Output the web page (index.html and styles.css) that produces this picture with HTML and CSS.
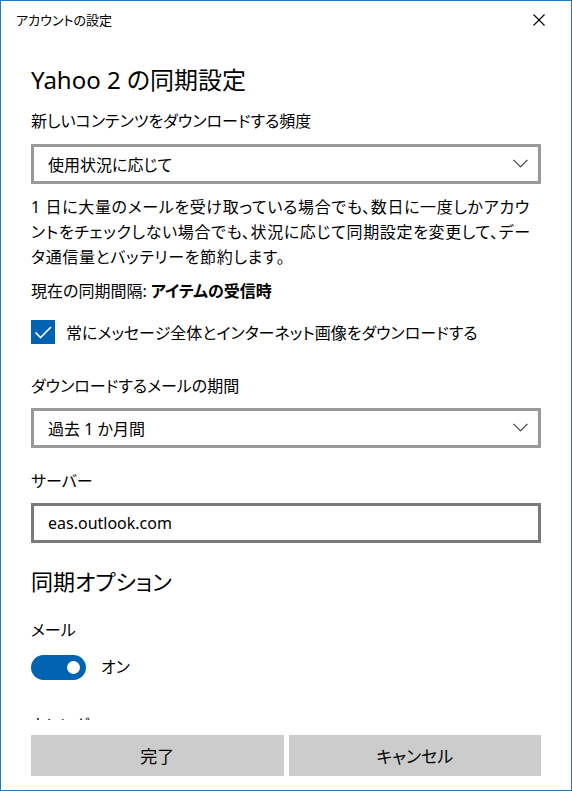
FILE: index.html
```html
<!DOCTYPE html>
<html lang="ja">
<head>
<meta charset="utf-8">
<title>アカウントの設定</title>
<link rel="stylesheet" href="styles.css">
</head>
<body>
<div class="window">
  <div class="titlebar">
    <span class="title">アカウントの設定</span>
    <span class="close" aria-label="閉じる">
      <svg width="12" height="12" viewBox="0 0 12 12"><path d="M0.5 0.5 L11.5 11.5 M11.5 0.5 L0.5 11.5" stroke="#000" stroke-width="1.1" fill="none"/></svg>
    </span>
  </div>
  <div class="scroll">
    <h1 class="heading">Yahoo 2 の同期設定</h1>
    <div class="label label-first">新しいコンテンツをダウンロードする頻度</div>
    <div class="select select-first">
      <span>使用状況に応じて</span>
      <svg class="chev" width="15" height="9" viewBox="0 0 15 9"><path d="M0.5 0.8 L7.5 7.8 L14.5 0.8" stroke="#333" stroke-width="1.1" fill="none"/></svg>
    </div>
    <p class="desc">1 日に大量のメールを受け取っている場合でも、数日に一度しかアカウ<br>ントをチェックしない場合でも、状況に応じて同期設定を変更して、デー<br>タ通信量とバッテリーを節約します。</p>
    <div class="current">現在の同期間隔: <b>アイテムの受信時</b></div>
    <div class="check-row">
      <span class="checkbox">
        <svg width="24" height="24" viewBox="0 0 24 24"><path d="M4.5 12.5 L9.5 17.5 L20 7" stroke="#fff" stroke-width="1.6" fill="none"/></svg>
      </span>
      <span>常にメッセージ全体とインターネット画像をダウンロードする</span>
    </div>
    <div class="label label-period">ダウンロードするメールの期間</div>
    <div class="select select-second">
      <span>過去 1 か月間</span>
      <svg class="chev" width="15" height="9" viewBox="0 0 15 9"><path d="M0.5 0.8 L7.5 7.8 L14.5 0.8" stroke="#333" stroke-width="1.1" fill="none"/></svg>
    </div>
    <div class="label label-server">サーバー</div>
    <div class="input">eas.outlook.com</div>
    <h2 class="subheading">同期オプション</h2>
    <div class="label label-mail">メール</div>
    <div class="toggle-row">
      <span class="toggle"><span class="knob"></span></span>
      <span>オン</span>
    </div>
    <div class="label label-cal">カレンダー</div>
  </div>
  <div class="footer">
    <button class="btn">完了</button>
    <button class="btn">キャンセル</button>
  </div>
</div>
</body>
</html>
```
FILE: styles.css
```css
* { box-sizing: border-box; }
html, body { margin: 0; padding: 0; background: #fff; }
body {
  font-family: "Noto Sans", "Noto Sans CJK JP", sans-serif;
  font-feature-settings: "palt";
  color: #000;
  font-size: 16px;
}
.window {
  width: 572px;
  height: 791px;
  border: 1px solid #1c79c7;
  display: flex;
  flex-direction: column;
  background: #fff;
  overflow: hidden;
}
.titlebar {
  height: 38px;
  flex: none;
  display: flex;
  align-items: center;
  justify-content: space-between;
  padding: 0 26px 0 15px;
}
.title { font-size: 13px; line-height: 38px; }
.close { display: flex; width: 12px; height: 12px; }
.scroll {
  flex: 1;
  overflow: hidden;
  padding: 0 30px;
}
.heading {
  margin: 25px 0 0;
  font-size: 24px;
  font-weight: normal;
  line-height: 32px;
}
.label { line-height: 24px; font-size: 16px; }
.label-first { margin-top: 13px; }
.select, .input {
  height: 40px;
  border: 3px solid #999;
  display: flex;
  align-items: center;
  justify-content: space-between;
  padding: 0 10px 0 14px;
  font-size: 16px;
}
.input { border-color: #7a7a7a; }
.chev { flex: none; margin-top: -1px; }
.select-first { margin-top: 11px; }
.desc {
  margin: 11px 0 0;
  line-height: 25px;
  letter-spacing: 0.65px;
  white-space: nowrap;
}
.current { margin-top: 9px; line-height: 24px; }
.current b { font-weight: bold; }
.check-row {
  margin-top: 17px;
  height: 24px;
  display: flex;
  align-items: center;
  gap: 11px;
}
.checkbox {
  width: 24px;
  height: 24px;
  background: #0063b1;
  display: flex;
}
.label-period { margin-top: 30px; }
.select-second { margin-top: 10px; }
.label-server { margin-top: 21px; }
.input { margin-top: 10px; }
.subheading {
  margin: 23px 0 0;
  font-size: 22px;
  font-weight: normal;
  line-height: 30px;
}
.label-mail { margin-top: 22px; }
.toggle-row {
  margin-top: 13px;
  display: flex;
  align-items: center;
  gap: 15px;
  line-height: 25px;
}
.toggle {
  width: 55px;
  height: 25px;
  border-radius: 13px;
  background: #0063b1;
  display: flex;
  align-items: center;
  justify-content: flex-end;
  padding-right: 6px;
}
.knob {
  width: 13px;
  height: 13px;
  border-radius: 50%;
  background: #fff;
}
.label-cal { margin-top: 33px; }
.footer {
  flex: none;
  height: 70px;
  padding: 15px 30px 0;
  display: grid;
  grid-template-columns: 1fr 1fr;
  column-gap: 5px;
  align-items: start;
}
.btn {
  height: 41px;
  border: none;
  background: #ccc;
  font-family: "Noto Sans", "Noto Sans CJK JP", sans-serif;
  font-feature-settings: "palt";
  font-size: 17px;
  color: #000;
  padding: 0;
}
```
